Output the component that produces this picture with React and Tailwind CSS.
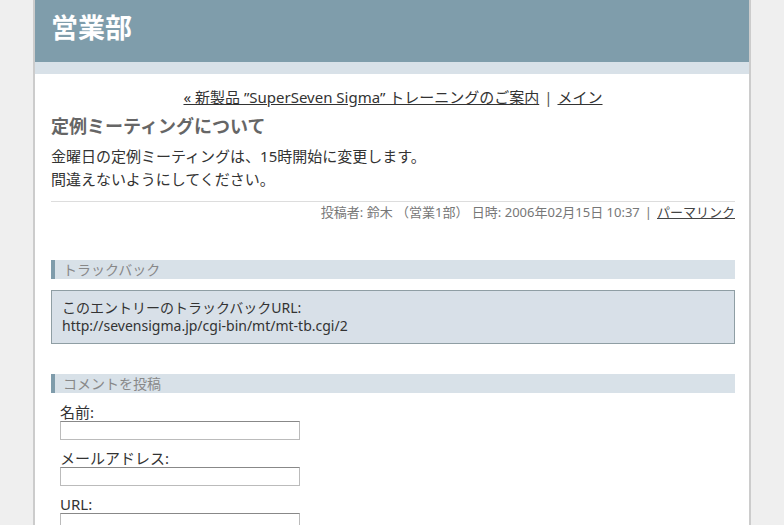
import React from "react";

const SectionHead = ({ children }) => (
  <div className="bg-[#d8e1e8] border-l-4 border-[#7f9cab] pl-2 h-[19px] leading-[19px] text-[14px] text-[#888]">
    {children}
  </div>
);

const Field = ({ label }) => (
  <div className="mb-[9px]">
    <div className="text-[15px] leading-[18px] text-[#333]">{label}</div>
    <input
      type="text"
      className="block w-[240px] h-[19px] border border-[#bbb] border-t-[#888] bg-white"
    />
  </div>
);

const App = () => {
  return (
    <div
      className="min-h-[525px] bg-[#efefef] overflow-hidden"
      style={{ fontFamily: '"Noto Sans", "Noto Sans CJK JP", sans-serif' }}
    >
      <div className="ml-[33px] w-[718px] min-h-[525px] border-x-2 border-[#cccccc] bg-white">
        <div className="h-[62px] bg-[#7f9dab] pl-4 flex items-center">
          <h1 className="text-[27px] font-bold text-white leading-none pb-2">営業部</h1>
        </div>
        <div className="h-[12px] bg-[#d8e1e8]" />

        <div className="pl-4 pr-[14px]">
          <div className="text-center text-[15px] text-[#333] mt-[13px] leading-[20px]">
            <a href="#" className="underline">« 新製品 ”SuperSeven Sigma” トレーニングのご案内</a>
            <span className="mx-[5px] text-[#555]">|</span>
            <a href="#" className="underline">メイン</a>
          </div>

          <h2 className="text-[18px] font-bold text-[#666] mt-[7px] leading-[24px]">
            定例ミーティングについて
          </h2>

          <div className="mt-[7px] text-[15px] text-[#333] leading-[23px]">
            <p>金曜日の定例ミーティングは、15時開始に変更します。</p>
            <p>間違えないようにしてください。</p>
          </div>

          <div className="mt-[10px] border-t border-[#dddddd] text-right text-[13px] text-[#777] leading-[20px]">
            投稿者: 鈴木 （営業1部） 日時: 2006年02月15日 10:37
            <span className="mx-[5px]">|</span>
            <a href="#" className="underline text-[#444]">パーマリンク</a>
          </div>

          <div className="mt-[38px]">
            <SectionHead>トラックバック</SectionHead>
          </div>

          <div className="mt-[11px] bg-[#d8e0e8] border border-[#8f9ea4] px-[10px] py-[8px] text-[14px] text-[#333] leading-[18px]">
            <p>このエントリーのトラックバックURL:</p>
            <p>http://sevensigma.jp/cgi-bin/mt/mt-tb.cgi/2</p>
          </div>

          <div className="mt-[30px]">
            <SectionHead>コメントを投稿</SectionHead>
          </div>

          <div className="pl-[9px] mt-[10px]">
            <Field label="名前:" />
            <Field label="メールアドレス:" />
            <Field label="URL:" />
          </div>
        </div>
      </div>
    </div>
  );
};

export default App;
